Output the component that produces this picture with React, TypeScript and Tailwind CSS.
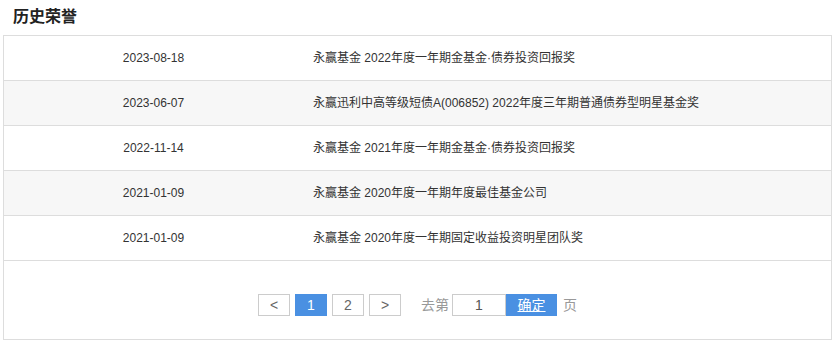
import React from 'react';

const honors = [
  { date: '2023-08-18', title: '永赢基金 2022年度一年期金基金·债券投资回报奖' },
  { date: '2023-06-07', title: '永赢迅利中高等级短债A(006852) 2022年度三年期普通债券型明星基金奖' },
  { date: '2022-11-14', title: '永赢基金 2021年度一年期金基金·债券投资回报奖' },
  { date: '2021-01-09', title: '永赢基金 2020年度一年期年度最佳基金公司' },
  { date: '2021-01-09', title: '永赢基金 2020年度一年期固定收益投资明星团队奖' },
];

const font = { fontFamily: '"Liberation Sans", "Noto Sans CJK SC", sans-serif' };

export default function App() {
  return (
    <div className="w-[835px] h-[344px] bg-white text-[#333]" style={font}>
      <div className="h-[35px] pl-[13px] pt-[5px] text-[16px] font-bold leading-[24px] text-[#222]">历史荣誉</div>
      <div className="mx-[3px] w-[829px] h-[305px] border border-[#ddd] flex flex-col">
        {honors.map((h, i) => (
          <div
            key={i}
            className={`flex h-[45px] items-center border-b border-[#ddd] text-[12px] ${i % 2 === 1 ? 'bg-[#f7f7f7]' : 'bg-white'}`}
          >
            <div className="w-[299px] text-center">{h.date}</div>
            <div className="pl-[10px]">{h.title}</div>
          </div>
        ))}
        <div className="flex-1 flex items-center justify-center text-[14px]">
          <div className="flex items-center h-[22px] mt-[10px]">
            <button className="w-[32px] h-[22px] border border-[#ccc] bg-white text-[#666]">&lt;</button>
            <button className="ml-[5px] w-[32px] h-[22px] bg-[#4a90e2] text-white">1</button>
            <button className="ml-[5px] w-[32px] h-[22px] border border-[#ccc] bg-white text-[#666]">2</button>
            <button className="ml-[5px] w-[32px] h-[22px] border border-[#ccc] bg-white text-[#666]">&gt;</button>
            <span className="ml-[20px] w-[28px] text-[#999]">去第</span>
            <div className="ml-[3px] w-[54px] h-[22px] border border-[#ccc] flex items-center justify-center text-[#555]">1</div>
            <button className="w-[51px] h-[22px] bg-[#4a90e2] text-white underline">确定</button>
            <span className="ml-[6px] text-[#999]">页</span>
          </div>
        </div>
      </div>
    </div>
  );
}
